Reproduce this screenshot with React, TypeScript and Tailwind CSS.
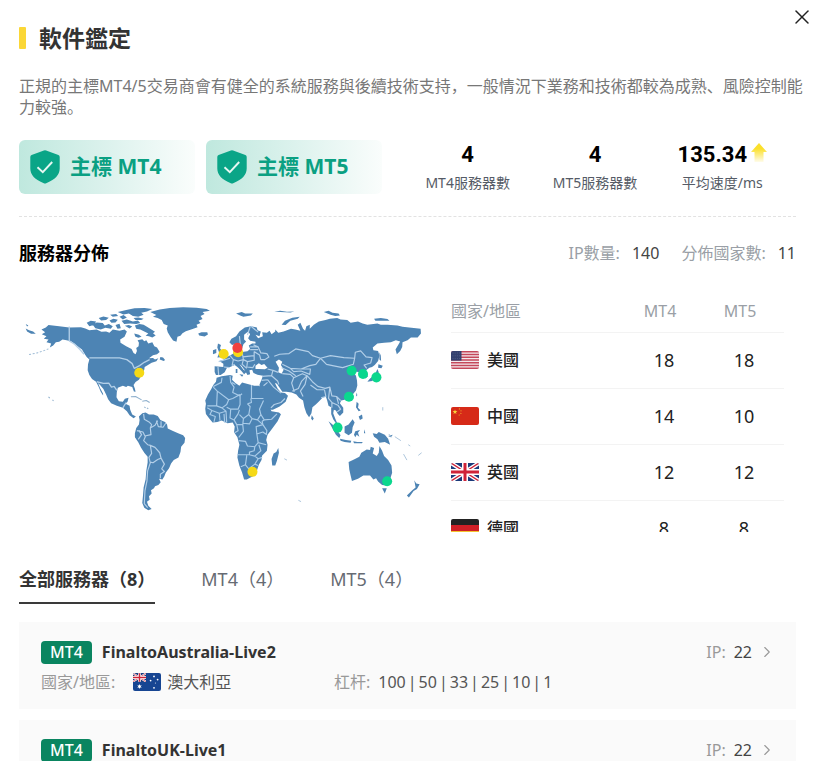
import { ChevronRight, X } from "lucide-react";
import { clsx } from "clsx";
import { Fragment, type ReactNode } from "react";

type FlagCode = "us" | "cn" | "gb" | "de" | "au";

const badges = ["主標 MT4", "主標 MT5"];

const stats = [
  { label: "MT4服務器數", value: "4" },
  { label: "MT5服務器數", value: "4" },
  { label: "平均速度/ms", value: "135.34", up: true },
];

const countries: { flag: FlagCode; name: string; mt4: number; mt5: number }[] = [
  { flag: "us", name: "美國", mt4: 18, mt5: 18 },
  { flag: "cn", name: "中國", mt4: 14, mt5: 10 },
  { flag: "gb", name: "英國", mt4: 12, mt5: 12 },
  { flag: "de", name: "德國", mt4: 8, mt5: 8 },
];

const tabs = ["全部服務器（8）", "MT4（4）", "MT5（4）"];

const servers: { name: string; flag: FlagCode; country: string; leverage: number[]; ip: number }[] = [
  {
    name: "FinaltoAustralia-Live2",
    flag: "au",
    country: "澳大利亞",
    leverage: [100, 50, 33, 25, 10, 1],
    ip: 22,
  },
  {
    name: "FinaltoUK-Live1",
    flag: "gb",
    country: "英國",
    leverage: [100, 50, 33, 25, 10, 1],
    ip: 22,
  },
];

function UnionJack() {
  return (
    <>
      <rect width="28" height="18" fill="#1b3a7a" />
      <path d="M0 0L28 18M28 0L0 18" stroke="#fff" strokeWidth="4" />
      <path d="M0 0L28 18M28 0L0 18" stroke="#cf2338" strokeWidth="1.4" />
      <path d="M14 0V18M0 9H28" stroke="#fff" strokeWidth="6" />
      <path d="M14 0V18M0 9H28" stroke="#cf2338" strokeWidth="3" />
    </>
  );
}

const flagArt: Record<FlagCode, ReactNode> = {
  us: (
    <>
      <rect width="28" height="18" fill="#f3e9ec" />
      <path
        d="M0 .7H28M0 3.5H28M0 6.2H28M0 9H28M0 11.8H28M0 14.5H28M0 17.3H28"
        stroke="#c5485b"
        strokeWidth="1.5"
      />
      <rect width="10.5" height="9.6" fill="#33416f" />
      <path d="M1.5 2H10M1.5 4.8H10M1.5 7.6H10" stroke="#5c6790" strokeWidth=".7" strokeDasharray="1 1.2" />
    </>
  ),
  cn: (
    <>
      <rect width="28" height="18" fill="#d62a18" />
      <path d="M4 2.4l.6 1.7h1.8L5 5.2l.5 1.8L4 5.9 2.5 7 3 5.2 1.6 4.1h1.8z" fill="#f8d03a" />
      <g fill="#f0a92d">
        <circle cx="8.4" cy="1.9" r=".6" />
        <circle cx="10" cy="3.8" r=".6" />
        <circle cx="9.9" cy="6.3" r=".6" />
        <circle cx="8.2" cy="8" r=".6" />
      </g>
    </>
  ),
  gb: <UnionJack />,
  de: (
    <>
      <rect width="28" height="6" fill="#222" />
      <rect y="6" width="28" height="6" fill="#cf1f26" />
      <rect y="12" width="28" height="6" fill="#f4c430" />
    </>
  ),
  au: (
    <>
      <rect width="28" height="18" fill="#174592" />
      <svg width="13" height="9" viewBox="0 0 28 18">
        <UnionJack />
      </svg>
      <g fill="#fff">
        <path d="M6.5 11l.6 1.5 1.6-.2-1 1.2 1 1.3-1.6-.2-.6 1.5-.6-1.5-1.6.2 1-1.3-1-1.2 1.6.2z" />
        <circle cx="21" cy="3.4" r=".9" />
        <circle cx="17.6" cy="7.6" r=".9" />
        <circle cx="24.6" cy="6.6" r=".9" />
        <circle cx="22.4" cy="10" r=".5" />
        <circle cx="21" cy="14.8" r=".9" />
      </g>
    </>
  ),
};

function Flag({ code }: { code: FlagCode }) {
  return (
    <svg viewBox="0 0 28 18" className="h-[18px] w-7 shrink-0 rounded-xs" aria-hidden>
      {flagArt[code]}
    </svg>
  );
}

function ShieldCheck() {
  return (
    <svg viewBox="0 0 30 34" className="h-[34px] w-[30px] shrink-0" aria-hidden>
      <path
        d="M13.9.5Q15 0 16.1.5L28.4 5Q29.7 5.5 29.7 6.9V18.5C29.7 25 25 29.5 16.2 33.2Q15 33.8 13.8 33.2C5 29.5.3 25 .3 18.5V6.9Q.3 5.5 1.6 5Z"
        fill="#0aa587"
      />
      <path d="M7.5 17.2l5.3 5L22.2 12" fill="none" stroke="#e6f7f2" strokeWidth="1.9" />
    </svg>
  );
}

function UpArrow() {
  return (
    <svg viewBox="0 0 16 20" className="mb-1 h-5 w-4" aria-hidden>
      <defs>
        <linearGradient id="arrow-fade" x1="0" y1="0" x2="0" y2="1">
          <stop offset="0.3" stopColor="#fbe02c" />
          <stop offset="1" stopColor="#fbe02c" stopOpacity="0.1" />
        </linearGradient>
      </defs>
      <path d="M8 0L16 9H12.500V19H3.500V9H0Z" fill="url(#arrow-fade)" />
    </svg>
  );
}

const pins = [
  { x: 419, y: 247, color: "#f5d916" },
  { x: 671, y: 191, color: "#f5d916" },
  { x: 714, y: 186, color: "#f5d916" },
  { x: 712, y: 173, color: "#f0413f" },
  { x: 757, y: 543, color: "#f5d916" },
  { x: 1053, y: 241, color: "#0bd78e" },
  { x: 1087, y: 251, color: "#0bd78e" },
  { x: 1127, y: 261, color: "#0bd78e" },
  { x: 1045, y: 319, color: "#0bd78e" },
  { x: 1011, y: 411, color: "#0bd78e" },
  { x: 1159, y: 571, color: "#0bd78e" },
];

function WorldMap() {
  return (
    <svg
      viewBox="60 30 1215 645"
      className="w-full"
      role="img"
      aria-label="服務器分佈"
      fill="#4d84b4"
      strokeLinejoin="round"
    >
      {/* North America */}
      <g transform="translate(30 0)">
        <path d="M97 118L110 112 118 105 150 108 180 112 215 111 228 115 240 120 262 118 276 125 290 124 300 128 310 118 330 122 345 118 352 124 345 140 332 148 333 158 350 168 366 176 372 188 378 192 382 182 380 173 387 168 388 158 384 150 398 147 404 153 410 150 416 160 428 156 434 168 442 172 450 185 442 192 430 195 418 204 430 203 436 208 446 204 440 213 426 217 415 224 405 230 404 238 396 250 394 258 388 268 378 275 372 284 376 295 378 304 373 303 368 290 355 286 350 290 340 286 325 292 322 305 321 320 328 332 340 334 346 325 357 322 354 334 348 340 360 346 362 358 368 372 379 378 372 383 360 374 352 362 340 352 322 346 305 338 296 326 290 312 282 296 272 284 266 278 272 293 281 310 281 315 274 304 268 290 260 274 248 266 240 254 235 240 236 222 240 208 232 200 225 190 218 178 205 168 195 160 185 153 172 150 160 148 150 155 140 156 132 166 122 172 126 160 112 156 118 148 104 146 112 138 98 132 108 126Z" />
        <path d="M50 115L60 120 72 124 80 131 66 131 54 124ZM50 102L58 106 54 109Z" />
        <path d="M232 98L244 92 260 94 255 104 240 108ZM250 104L262 97 280 99 286 106 298 102 310 108 304 116 288 113 274 118 258 114ZM268 84L282 79 298 83 290 90 275 91ZM300 91L312 86 325 89 318 97 306 98ZM318 105L330 101 334 114 324 116ZM302 74L320 72 326 78 310 80ZM330 80L342 75 352 82 340 88ZM336 92L352 88 370 94 385 91 392 99 380 102 362 100 344 102ZM325 66L350 60 375 55 405 54 428 57 412 64 395 68 402 74 386 80 370 78 358 70 342 73ZM372 84L386 82 402 86 395 90 378 90Z" />
        <path d="M346 107L358 105 368 109 360 115ZM376 106L390 102 402 104 412 110 424 117 436 125 430 129 438 136 428 142 418 138 408 137 416 130 404 124 392 118 380 116ZM374 130L388 134 396 140 386 143 377 139Z" />
        <path d="M422 66L450 58 480 54 520 52 560 53 590 57 600 62 578 66 584 72 572 78 578 87 566 92 572 99 560 104 563 111 546 117 528 123 518 129 512 137 503 140 500 155 490 151 482 140 474 126 471 115 474 106 462 102 456 90 444 84 430 80 440 75Z" />
        <path d="M565 130L575 126 592 126 594 133 584 139 568 136ZM452 200L460 202 466 209 462 212 450 208Z" />
        <path
          d="M364 319L378 318 396 328M398 332L410 330 420 336M118 319L122 323M130 328L133 331M404 349l4 3M412 352l4 3"
          stroke="#8fb0cd"
          strokeWidth="3"
          fill="none"
        />
        <path
          d="M60 193L84 188 102 182 118 176"
          stroke="#9fbcd6"
          strokeWidth="3"
          strokeDasharray="6 5"
          fill="none"
        />
        <path
          d="M180 109V152L196 162 212 178 224 192M240 203H330L352 208 368 220 374 234 390 226 404 216 420 208M262 274L282 279 298 278 306 290 314 288 322 300M340 352L346 342 350 336"
          stroke="#b3cfe8"
          strokeWidth="4"
          fill="none"
        />
      </g>

      {/* South America, Africa, Europe and Asia */}
      <g transform="translate(390 0)">
        <path d="M38 368L48 366 58 372 72 372 84 376 92 388 106 394 112 402 114 414 128 420 145 428 160 434 166 442 164 456 154 468 152 484 146 500 132 508 124 518 118 532 108 546 104 556 98 566 88 564 93 574 86 582 76 586 73 592 64 598 66 608 58 616 60 626 52 632 56 644 66 654 56 658 44 650 38 636 40 615 42 590 48 565 50 540 54 515 54 498 44 486 34 470 26 455 16 440 16 428 20 412 28 402 30 388 28 378Z" />
        <path
          d="M42 370L44 386 58 394 66 402 62 412 64 432 46 436 40 424 22 420M28 420L36 432 26 446M62 412L76 404 84 390M80 390L86 408 100 410 108 398M94 392V408M48 436L42 450 54 462 62 464 66 488 58 500 62 516 54 540 52 570 46 600 44 638 54 650M62 464L76 470 90 486 94 502 84 506 70 516 62 514M94 502L104 520 96 534 104 542 92 550 92 562"
          stroke="#b3cfe8"
          strokeWidth="3.500"
          fill="none"
        />

        <path d="M260 262L275 258 300 254 308 256 306 268 316 278 328 286 336 276 350 280 372 286 388 286 394 300 400 314 408 330 416 348 424 362 446 366 452 371 442 392 425 415 412 432 408 448 412 462 410 480 396 494 394 508 386 522 380 540 368 556 350 566 342 566 336 545 328 525 322 500 324 480 328 462 322 440 312 425 314 408 308 396 292 398 275 390 262 394 248 396 238 384 228 370 226 355 228 340 226 330 234 312 244 296 250 284 258 274Z" />
        <path d="M444 472L446 486 440 510 435 524 426 524 424 505 430 488 438 484Z" />
        <path
          d="M276 262L274 276 250 288M250 290L262 302 296 328 308 324 330 312M300 256L302 276 312 290 308 306 328 316 336 310M306 276L316 282M364 284V324H400M362 324L364 336 352 340M330 314L330 342 324 356 302 356 290 350M262 302L260 346 232 346M260 346L276 352 290 342 296 328M232 352L246 360 240 372 256 378 252 394M246 360L268 368 270 390M276 352L288 362 290 396M268 368L288 362M284 396L282 370M302 356L300 382 312 388 324 370 328 358M312 388L320 402H338L340 384 328 372M340 384L356 372 360 348 352 340M356 372L366 384 382 388 392 372 388 356 400 330M366 384L358 400 340 398M392 372L402 388 424 386 440 370M382 388L398 402 396 392 402 388M398 402L410 420 408 432M320 402L324 420 314 426M338 402L340 422 326 440M326 450L346 452 352 466 374 468 384 456 380 430 398 424 410 432M380 430L378 408 398 402M384 456L408 462M374 468L372 480 358 484 358 492 322 492M358 492L374 496 392 480 386 462M350 494L346 522 332 528M346 522L356 534 374 520 384 504 374 496M384 504L396 500M374 520L384 524"
          stroke="#a9cbe8"
          strokeWidth="3.500"
          fill="none"
        />

        <path d="M254 228L280 230 280 220 268 212 282 208 290 200 300 196 310 190 320 178 330 186 352 183 360 176 356 166 366 160 376 160 376 155 360 152 354 144 360 132 354 124 342 134 342 148 348 154 340 162 336 174 328 178 320 160 306 164 298 156 304 146 318 138 328 124 344 112 362 108 380 112 382 120 392 124 388 138 376 134 384 144 398 138 396 126 410 128 418 122 424 132 435 124 435 118 444 128 460 124 482 116 495 118 510 122 502 104 510 98 518 116 524 122 528 108 538 104 538 116 550 104 565 94 585 90 598 86 620 84 630 88 650 90 660 98 682 94 696 100 710 104 740 100 750 104 770 104 800 106 815 110 835 112 869 116 870 130 860 142 840 142 830 150 815 156 814 170 808 182 798 192 794 178 802 164 808 154 795 150 780 156 760 158 740 160 726 172 728 180 742 182 746 196 742 212 732 224 724 230 716 232 706 240 706 250 712 258 704 264 696 256 688 246 678 244 668 246 676 256 679 270 680 285 676 300 666 312 656 322 642 328 632 330 628 338 638 352 638 366 628 376 622 370 616 360 610 358 608 368 614 384 620 398 616 398 608 386 602 370 602 350 594 346 590 330 586 318 576 322 566 332 556 342 546 350 543 368 536 380 528 368 522 350 518 330 506 322 498 312 484 306 468 304 456 304 448 292 440 280 434 278 442 294 452 306 464 308 473 316 466 334 448 348 428 358 418 358 408 340 398 318 390 298 388 282 394 268 398 256 382 253 370 248 366 238 358 240 360 252 352 254 344 240 334 226 328 222 340 238 350 244 342 252 334 242 322 230 314 224 300 230 290 234 284 246 272 254 258 254 254 245Z" />
        <path d="M264 160L273 164 270 174 280 188 282 200 262 202 268 188 262 172ZM249 180L259 176 259 188 249 192ZM318 70L335 66 345 70 368 70 362 76 340 80 330 76ZM317 236l5 0 0 12-5 0ZM328 252l12 1-4 6Z" />
        <path
          d="M376 226L386 219 394 224 402 221 412 232 404 237 386 236 376 236ZM436 214L446 208 456 214 452 224 460 238 454 250 444 246 446 232Z"
          fill="#fff"
        />
        <path
          d="M264 230L266 254M282 230L298 232M300 196L310 208 306 226M310 208L324 212 340 208M336 186L340 208 352 214 372 210 372 184M338 200L372 196M328 138L332 176M360 110L352 134M362 108L384 126M372 184L388 194 392 208 404 208 416 200 410 190 392 188 384 170 370 164M360 170H382M360 178H384M352 214L350 230 368 232 374 222M340 208L336 222 350 234M412 236L428 240 424 256 396 258M424 256L442 272 446 282M428 240L444 246M412 268L430 290 452 308M394 270L412 268M422 352L432 342 452 336 464 324M400 286L412 276M306 226L314 222M266 214L300 204M432 198L448 192 476 190 496 176 534 184 546 196 570 204 556 222 538 226 512 236 480 234 456 222M570 204L600 196 640 202 672 204 668 222 636 232 606 226 588 222 570 204M672 204L674 186 690 182 706 200 724 202 720 218 700 224 708 234M456 250L480 252 490 262 484 278 492 304M490 262L516 250 530 256 514 272 504 294 486 302M454 232L476 242 496 256M480 234L490 244 512 242 538 252 540 236 512 236M530 256L546 274 562 288 584 294 598 290 604 316 618 318 630 330M540 284L560 298 582 298M582 298L586 318 572 322M530 256L524 282 510 302 518 318M598 290L594 324 604 336 604 352M604 336L622 344 630 356 620 364M618 318L624 340"
          stroke="#b3cfe8"
          strokeWidth="3.500"
          fill="none"
        />
      </g>

      {/* Arctic islands, South-East Asia and Oceania */}
      <g transform="translate(810 0)">
        <path d="M34 104L44 92 66 83 88 80 82 86 60 92 46 105ZM160 66L174 62 186 68 204 70 208 76 194 78 180 74ZM310 86L330 84 350 87 356 92 332 92 314 92ZM12 64L30 62 50 65 72 64 60 67 30 66Z" />
        <path d="M326 186L330 196 331 212 326 208ZM323 222L336 226 332 234 322 232ZM320 236L324 246 314 262 304 272 290 274 298 264 312 254ZM258 306L260 314 256 318ZM124 374L130 384 126 390 122 384Z" />
        <path d="M174 392L186 402 198 416 210 434 206 442 196 432 186 414ZM222 408L234 402 246 386 252 396 246 410 244 426 234 434 222 426ZM208 444L226 448 242 450 240 456 222 454 210 450ZM248 452l12 2 16 0-2 4-24 0ZM254 422L268 418 262 426 266 438 258 432 254 440 250 432ZM258 334L264 340 262 352 270 360 264 362 256 350ZM264 378L274 372 276 384 268 388ZM280 416l4 12-4 0ZM306 428L318 430 324 424 342 432 352 444 358 462 342 454 326 456 320 446 310 438ZM352 436l14-4-6 8Z" />
        <path d="M234 514L250 506 266 498 272 486 288 476 298 478 300 468 310 472 306 488 318 496 324 486 326 466 334 480 340 496 352 508 362 524 364 546 356 570 346 584 334 582 322 572 316 562 308 566 298 554 278 554 262 564 244 570 240 554 236 536Z" />
        <path d="M334 592L348 592 342 608ZM430 568L436 578 446 580 438 594 428 600 414 620 408 614 424 598 434 590Z" />
        <path
          d="M354 430l8 10M372 438l18 12M398 490l10 18M442 494l10-8M412 462l6 4M336 350v10M84 628l8 4M42 504l8 4"
          stroke="#9fbcd6"
          strokeWidth="2.500"
        />
      </g>

      {pins.map((pin) => (
        <circle key={`${pin.x}-${pin.y}`} cx={pin.x} cy={pin.y} r="15" fill={pin.color} />
      ))}
    </svg>
  );
}

function CountryTable() {
  return (
    <div className="h-[242px] overflow-y-auto [scrollbar-width:none]">
      <table className="w-full table-fixed border-collapse">
        <thead>
          <tr className="h-[42px] border-b border-[#f3f3f3] text-base leading-5 text-[#9a9fa6]">
            <th className="text-left font-normal">國家/地區</th>
            <th className="w-20 pr-2 font-normal">MT4</th>
            <th className="w-20 pr-2 font-normal">MT5</th>
          </tr>
        </thead>
        <tbody>
          {countries.map((c) => (
            <tr key={c.flag} className="h-14 border-b border-[#f3f3f3] text-lg leading-6 text-[#222]">
              <td>
                <div className="flex items-center gap-2 text-base font-medium">
                  <Flag code={c.flag} />
                  {c.name}
                </div>
              </td>
              <td className="text-center">{c.mt4}</td>
              <td className="text-center">{c.mt5}</td>
            </tr>
          ))}
        </tbody>
      </table>
    </div>
  );
}

function ServerCard({ server }: { server: (typeof servers)[number] }) {
  return (
    <li className="bg-[#fafafa] px-[22px] pt-[18px] pb-[15px]">
      <div className="flex items-center">
        <span className="rounded-sm bg-[#0a8560] px-[9px] text-base leading-[23px] font-medium text-white">
          MT4
        </span>
        <h3 className="ml-[10px] text-base leading-6 font-bold text-[#333]">{server.name}</h3>
        <a href="#server" className="ml-auto flex items-center text-base leading-6 text-[#444]">
          <span className="mr-2 text-[#999]">IP:</span>
          {server.ip}
          <ChevronRight className="ml-[6px] -mr-[2px] size-[18px] text-[#999]" strokeWidth={1.5} />
        </a>
      </div>
      <div className="mt-[6px] grid grid-cols-[293px_1fr] text-base leading-6 text-[#555]">
        <div className="flex items-center">
          <span className="mr-[18px] text-[#999]">國家/地區:</span>
          <Flag code={server.flag} />
          <span className="ml-[6px]">{server.country}</span>
        </div>
        <div className="flex gap-[2px]">
          <span className="mr-[6px] text-[#999]">杠杆:</span>
          {server.leverage.map((ratio, i) => (
            <Fragment key={ratio}>
              {i > 0 && <span>|</span>}
              <span>{ratio}</span>
            </Fragment>
          ))}
        </div>
      </div>
    </li>
  );
}

export default function App() {
  return (
    <main className="relative min-h-screen bg-white pt-6 pr-[22px] pb-6 pl-[19px] font-['Noto_Sans','Noto_Sans_CJK_SC',sans-serif]">
      <button type="button" aria-label="關閉" className="absolute top-[5px] right-1 text-[#222]">
        <X className="size-6" strokeWidth={1.5} />
      </button>

      <h1 className="flex items-center gap-[13px] text-[23px] leading-7 font-bold text-[#333]">
        <span className="h-[22px] w-[7px] rounded-[1px] bg-[#fbd737]" />
        軟件鑑定
      </h1>
      <p className="mt-6 -mr-3 text-base leading-[21px] text-[#777]">
        正規的主標MT4/5交易商會有健全的系統服務與後續技術支持，一般情況下業務和技術都較為成熟、風險控制能力較強。
      </p>

      <section className="mt-[21px] flex items-center border-b border-dashed border-[#e2e2e2] pb-[21px]">
        <div className="flex gap-[11px]">
          {badges.map((badge) => (
            <div
              key={badge}
              className="flex h-[54px] w-44 items-center gap-[10px] rounded-md bg-linear-to-r from-[#bfe8de] via-[#dcf2ed] to-[#fafdfc] pl-[11px] text-[21px] font-bold text-[#0aa082]"
            >
              <ShieldCheck />
              {badge}
            </div>
          ))}
        </div>
        <dl className="ml-auto grid w-[392px] grid-cols-3 pr-[10px]">
          {stats.map((stat) => (
            <div key={stat.label} className="flex flex-col-reverse items-center">
              <dt className="text-sm leading-6 text-[#555b66]">{stat.label}</dt>
              <dd className="flex items-center gap-1 font-['Roboto',sans-serif] text-[22px] leading-8 font-bold text-black">
                {stat.value}
                {stat.up && <UpArrow />}
              </dd>
            </div>
          ))}
        </dl>
      </section>

      <section>
        <div className="mt-6 flex items-center justify-between">
          <h2 className="text-lg leading-6 font-bold text-black">服務器分佈</h2>
          <div className="flex gap-[22px] text-base leading-6 text-[#444]">
            <span>
              <span className="mr-3 text-[#9a9fa6]">IP數量:</span>140
            </span>
            <span>
              <span className="mr-3 text-[#9a9fa6]">分佈國家數:</span>11
            </span>
          </div>
        </div>
        <div className="mt-[25px] grid grid-cols-[407fr_333fr] gap-[25px] pr-3">
          <div className="pt-[10px]">
            <WorldMap />
          </div>
          <CountryTable />
        </div>
      </section>

      <div role="tablist" className="mt-[35px] flex gap-[46px]">
        {tabs.map((tab, i) => (
          <button
            key={tab}
            type="button"
            role="tab"
            aria-selected={i === 0}
            className={clsx(
              "border-b-2 pb-[11px] text-lg leading-6",
              i === 0 ? "border-[#3a3a3a] font-bold text-[#333]" : "border-transparent text-[#666b73]",
            )}
          >
            {tab}
          </button>
        ))}
      </div>

      <ul className="mt-[18px] flex flex-col gap-[11px]">
        {servers.map((server) => (
          <ServerCard key={server.name} server={server} />
        ))}
      </ul>
    </main>
  );
}
